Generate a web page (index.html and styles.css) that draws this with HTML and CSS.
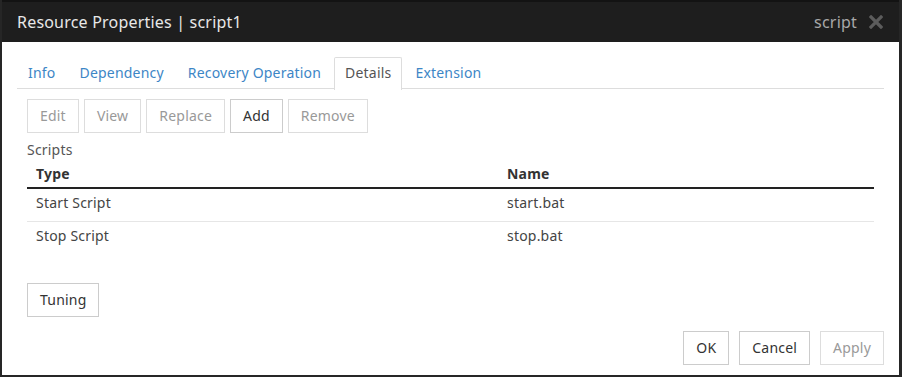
FILE: index.html
```html
<!DOCTYPE html>
<html lang="en">
<head>
    <meta charset="UTF-8">
    <title>Resource Properties | script1</title>
    <link rel="stylesheet" href="styles.css">
</head>
<body>
    <div class="dialog">
        <div class="dialog-header">
            <h1 class="dialog-title">Resource Properties | script1</h1>
            <div class="dialog-type">
                <span>script</span>
                <svg class="close-icon" width="14" height="14" viewBox="0 0 14 14">
                    <path d="M2 2 L12 12 M12 2 L2 12" stroke="#5c5c5c" stroke-width="3.2" stroke-linecap="square"/>
                </svg>
            </div>
        </div>

        <div class="dialog-body">
            <ul class="tabs">
                <li class="tab">Info</li>
                <li class="tab">Dependency</li>
                <li class="tab">Recovery Operation</li>
                <li class="tab active">Details</li>
                <li class="tab">Extension</li>
            </ul>

            <div class="tab-content">
                <div class="toolbar">
                    <button class="btn" disabled>Edit</button>
                    <button class="btn" disabled>View</button>
                    <button class="btn" disabled>Replace</button>
                    <button class="btn">Add</button>
                    <button class="btn" disabled>Remove</button>
                </div>

                <div class="section-label">Scripts</div>
                <table class="script-table">
                    <thead>
                        <tr>
                            <th class="col-type">Type</th>
                            <th>Name</th>
                        </tr>
                    </thead>
                    <tbody>
                        <tr>
                            <td>Start Script</td>
                            <td>start.bat</td>
                        </tr>
                        <tr>
                            <td>Stop Script</td>
                            <td>stop.bat</td>
                        </tr>
                    </tbody>
                </table>

                <button class="btn tuning">Tuning</button>
            </div>

            <div class="dialog-footer">
                <button class="btn">OK</button>
                <button class="btn">Cancel</button>
                <button class="btn" disabled>Apply</button>
            </div>
        </div>
    </div>
</body>
</html>
```

FILE: styles.css
```css
:root {
    --frame: #262626;
    --header-bg: #1e1e1e;
    --link: #3d86c6;
    --border-light: #dddddd;
    --border: #cccccc;
    --text: #333333;
    --text-muted: #999999;
}

* {
    margin: 0;
    padding: 0;
    box-sizing: border-box;
}

body {
    font-family: 'Noto Sans', 'Open Sans', sans-serif;
    font-size: 14px;
    letter-spacing: 0.2px;
    color: var(--text);
    background: #fff;
}

.dialog {
    width: 902px;
    height: 377px;
    border-left: 2px solid var(--frame);
    border-right: 3px solid var(--frame);
    border-bottom: 2px solid var(--frame);
    display: flex;
    flex-direction: column;
}

.dialog-header {
    height: 42px;
    background: var(--header-bg);
    border-top: 2px solid #131313;
    display: flex;
    align-items: center;
    justify-content: space-between;
    padding: 0 16px 0 15px;
}

.dialog-title {
    font-size: 16px;
    font-weight: 400;
    letter-spacing: 0.2px;
    color: #e8e8e8;
}

.dialog-type {
    display: flex;
    align-items: center;
    gap: 12px;
    font-size: 16px;
    color: #a8a8a8;
}

.close-icon {
    display: block;
}

.dialog-body {
    flex: 1;
    padding: 15px 15px 10px;
    display: flex;
    flex-direction: column;
}

.tabs {
    list-style: none;
    display: flex;
    border-bottom: 1px solid var(--border-light);
    height: 32px;
}

.tab {
    height: 32px;
    padding: 0 10px;
    margin-right: 2px;
    border: 1px solid transparent;
    border-bottom: none;
    color: var(--link);
    line-height: 30px;
}

.tab.active {
    color: #555;
    border-color: var(--border-light);
    background: #fff;
    height: 33px;
    border-radius: 2px 2px 0 0;
}

.tab-content {
    flex: 1;
    padding: 10px 10px 0;
}

.toolbar {
    display: flex;
    gap: 5px;
}

.btn {
    font-family: inherit;
    font-size: 14px;
    letter-spacing: inherit;
    height: 34px;
    padding: 0 12px 2px;
    background: #fff;
    border: 1px solid var(--border);
    color: var(--text);
    cursor: pointer;
}

.btn:disabled {
    color: var(--text-muted);
    border-color: var(--border-light);
    cursor: default;
}

.section-label {
    margin-top: 7px;
    color: #555;
    line-height: 20px;
}

.script-table {
    width: 100%;
    border-collapse: collapse;
    margin-top: 2px;
}

.script-table th {
    text-align: left;
    font-weight: 700;
    color: #333;
    padding: 2px 9px 3px;
    line-height: 20px;
    border-bottom: 2px solid #222;
}

.col-type {
    width: 471px;
}

.script-table td {
    padding: 4px 9px 0;
    height: 33px;
    line-height: 20px;
    vertical-align: top;
    color: #444;
}

.script-table tbody tr:first-child td {
    border-bottom: 1px solid #e6e6e6;
}

.tuning {
    margin-top: 29px;
    padding: 0 12px 2px;
}

.dialog-footer {
    display: flex;
    justify-content: flex-end;
    gap: 10px;
}
```
